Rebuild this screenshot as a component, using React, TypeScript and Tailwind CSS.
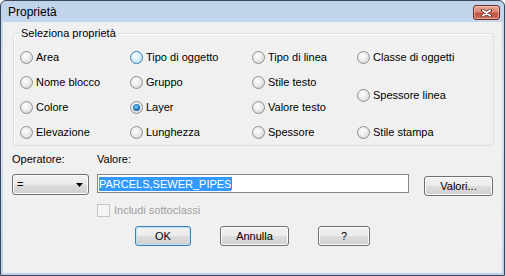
import React from 'react'

type RadioState = 'normal' | 'hover' | 'checked'

const OPTIONS: { label: string; state?: RadioState; cls: string }[] = [
  { label: 'Area', cls: 'col-start-1 row-start-1' },
  { label: 'Nome blocco', cls: 'col-start-1 row-start-2' },
  { label: 'Colore', cls: 'col-start-1 row-start-3' },
  { label: 'Elevazione', cls: 'col-start-1 row-start-4' },
  { label: 'Tipo di oggetto', state: 'hover', cls: 'col-start-2 row-start-1' },
  { label: 'Gruppo', cls: 'col-start-2 row-start-2' },
  { label: 'Layer', state: 'checked', cls: 'col-start-2 row-start-3' },
  { label: 'Lunghezza', cls: 'col-start-2 row-start-4' },
  { label: 'Tipo di linea', cls: 'col-start-3 row-start-1' },
  { label: 'Stile testo', cls: 'col-start-3 row-start-2' },
  { label: 'Valore testo', cls: 'col-start-3 row-start-3' },
  { label: 'Spessore', cls: 'col-start-3 row-start-4' },
  { label: 'Classe di oggetti', cls: 'col-start-4 row-start-1' },
  { label: 'Spessore linea', cls: 'col-start-4 row-start-2 row-span-2' },
  { label: 'Stile stampa', cls: 'col-start-4 row-start-4' },
]

function Radio({ state = 'normal' }: { state?: RadioState }) {
  if (state === 'hover') {
    return (
      <span className="w-[13px] h-[13px] rounded-full border border-[#3c7fb1] bg-[radial-gradient(circle_at_40%_35%,#ffffff_0%,#d6efff_45%,#a6d8f6_100%)] shrink-0" />
    )
  }
  return (
    <span className="w-[13px] h-[13px] rounded-full border border-[#8e8f8f] bg-[radial-gradient(circle_at_40%_35%,#ffffff_0%,#ececec_45%,#cdcdcd_100%)] flex items-center justify-center shrink-0">
      {state === 'checked' && (
        <span className="w-[7px] h-[7px] rounded-full bg-[radial-gradient(circle_at_45%_40%,#9fe0ff_0%,#2b8ad2_40%,#0b3a6c_100%)]" />
      )}
    </span>
  )
}

function Button({ children, w, primary }: { children: React.ReactNode; w: string; primary?: boolean }) {
  return (
    <div
      className={`${w} h-[20px] rounded-[3px] border flex items-center justify-center bg-[linear-gradient(#f2f2f2_0%,#ebebeb_48%,#dddddd_52%,#cfcfcf_100%)] ${
        primary
          ? 'border-[#3c7fb1] shadow-[inset_0_0_0_1px_#b6e3f8]'
          : 'border-[#707070] shadow-[inset_0_0_0_1px_#fbfbfb]'
      }`}
    >
      {children}
    </div>
  )
}

export default function App() {
  return (
    <div className="w-[505px] h-[276px] flex flex-col border border-[#3a4657] rounded-t-[6px] overflow-hidden bg-[linear-gradient(#bfd3eb_0%,#d4e2f2_40%,#bcd3ec_100%)] font-['Liberation_Sans',Arial,sans-serif] text-[11px] text-black">
      {/* title bar */}
      <div className="h-[21px] shrink-0 flex items-start justify-between pl-[7px] pr-[4px]">
        <span className="text-[12px] leading-[21px] pt-[1px]">Proprietà</span>
        <div className="mt-[4px] w-[27px] h-[15px] rounded-[3px] border border-[#6e2b22] bg-[linear-gradient(#e9ab9b_0%,#d98470_45%,#c45443_55%,#c9705e_100%)] shadow-[inset_0_0_0_1px_rgba(255,220,210,0.5)] flex items-center justify-center">
          <svg width="11" height="8" viewBox="0 0 11 8">
            <path d="M1.5 1 L9.5 7 M9.5 1 L1.5 7" stroke="#5a2a24" strokeWidth="3.2" strokeLinecap="round" />
            <path d="M1.8 1.2 L9.2 6.8 M9.2 1.2 L1.8 6.8" stroke="#ffffff" strokeWidth="1.8" strokeLinecap="round" />
          </svg>
        </div>
      </div>

      {/* client area */}
      <div className="flex-1 mx-[2px] mb-[2px] bg-[#f0f0f0] flex flex-col">
        {/* group box */}
        <div className="relative mt-[11px] ml-[10px] w-[481px] h-[113px] border border-[#d5dfe5] rounded-[3px] shadow-[inset_1px_1px_0_#ffffff]">
          <span className="absolute -top-[7px] left-[5px] px-[2px] bg-[#f0f0f0] leading-[13px]">Seleziona proprietà</span>
          <div className="grid grid-cols-[110px_122px_105px_1fr] grid-rows-[25px_25px_25px_25px] pt-[11px] pl-[6px]">
            {OPTIONS.map(o => (
              <div key={o.label} className={`flex items-center gap-[3px] ${o.cls}`}>
                <Radio state={o.state} />
                <span className="leading-[13px]">{o.label}</span>
              </div>
            ))}
          </div>
        </div>

        {/* operator / value */}
        <div className="grid grid-cols-[77px_1fr] gap-x-[8px] ml-[9px] mt-[7px]">
          <span className="leading-[13px]">Operatore:</span>
          <span className="leading-[13px]">Valore:</span>

          <div className="mt-[8px] h-[21px] rounded-[3px] border border-[#707070] bg-[linear-gradient(#f2f2f2_0%,#ebebeb_48%,#dddddd_52%,#cfcfcf_100%)] shadow-[inset_0_0_0_1px_#fbfbfb] flex items-center justify-between pl-[4px] pr-[5px]">
            <span className="leading-[13px]">=</span>
            <svg width="7" height="4" viewBox="0 0 7 4">
              <path d="M0 0 H7 L3.5 4 Z" fill="#000" />
            </svg>
          </div>
          <div className="mt-[8px] flex items-start">
            <div className="w-[312px] h-[19px] border border-[#828790] bg-white flex items-center pl-[1px]">
              <span className="bg-[#3399ff] text-white leading-[14px]">PARCELS,SEWER_PIPES</span>
              <span className="w-[1px] h-[13px] bg-[#c06a2a]" />
            </div>
            <div className="ml-[15px] mt-[2px]">
              <Button w="w-[69px]">Valori...</Button>
            </div>
          </div>

          <div />
          <div className="mt-[8px] flex items-center gap-[4px]">
            <span className="w-[13px] h-[13px] border border-[#c5c5c5] bg-[#f4f4f4]" />
            <span className="text-[#a0a0a0] leading-[13px]">Includi sottoclassi</span>
          </div>
        </div>

        {/* buttons */}
        <div className="flex gap-[29px] pl-[132px] mt-[9px]">
          <Button w="w-[56px]" primary>OK</Button>
          <Button w="w-[69px]">Annulla</Button>
          <Button w="w-[52px]">?</Button>
        </div>
      </div>
    </div>
  )
}
